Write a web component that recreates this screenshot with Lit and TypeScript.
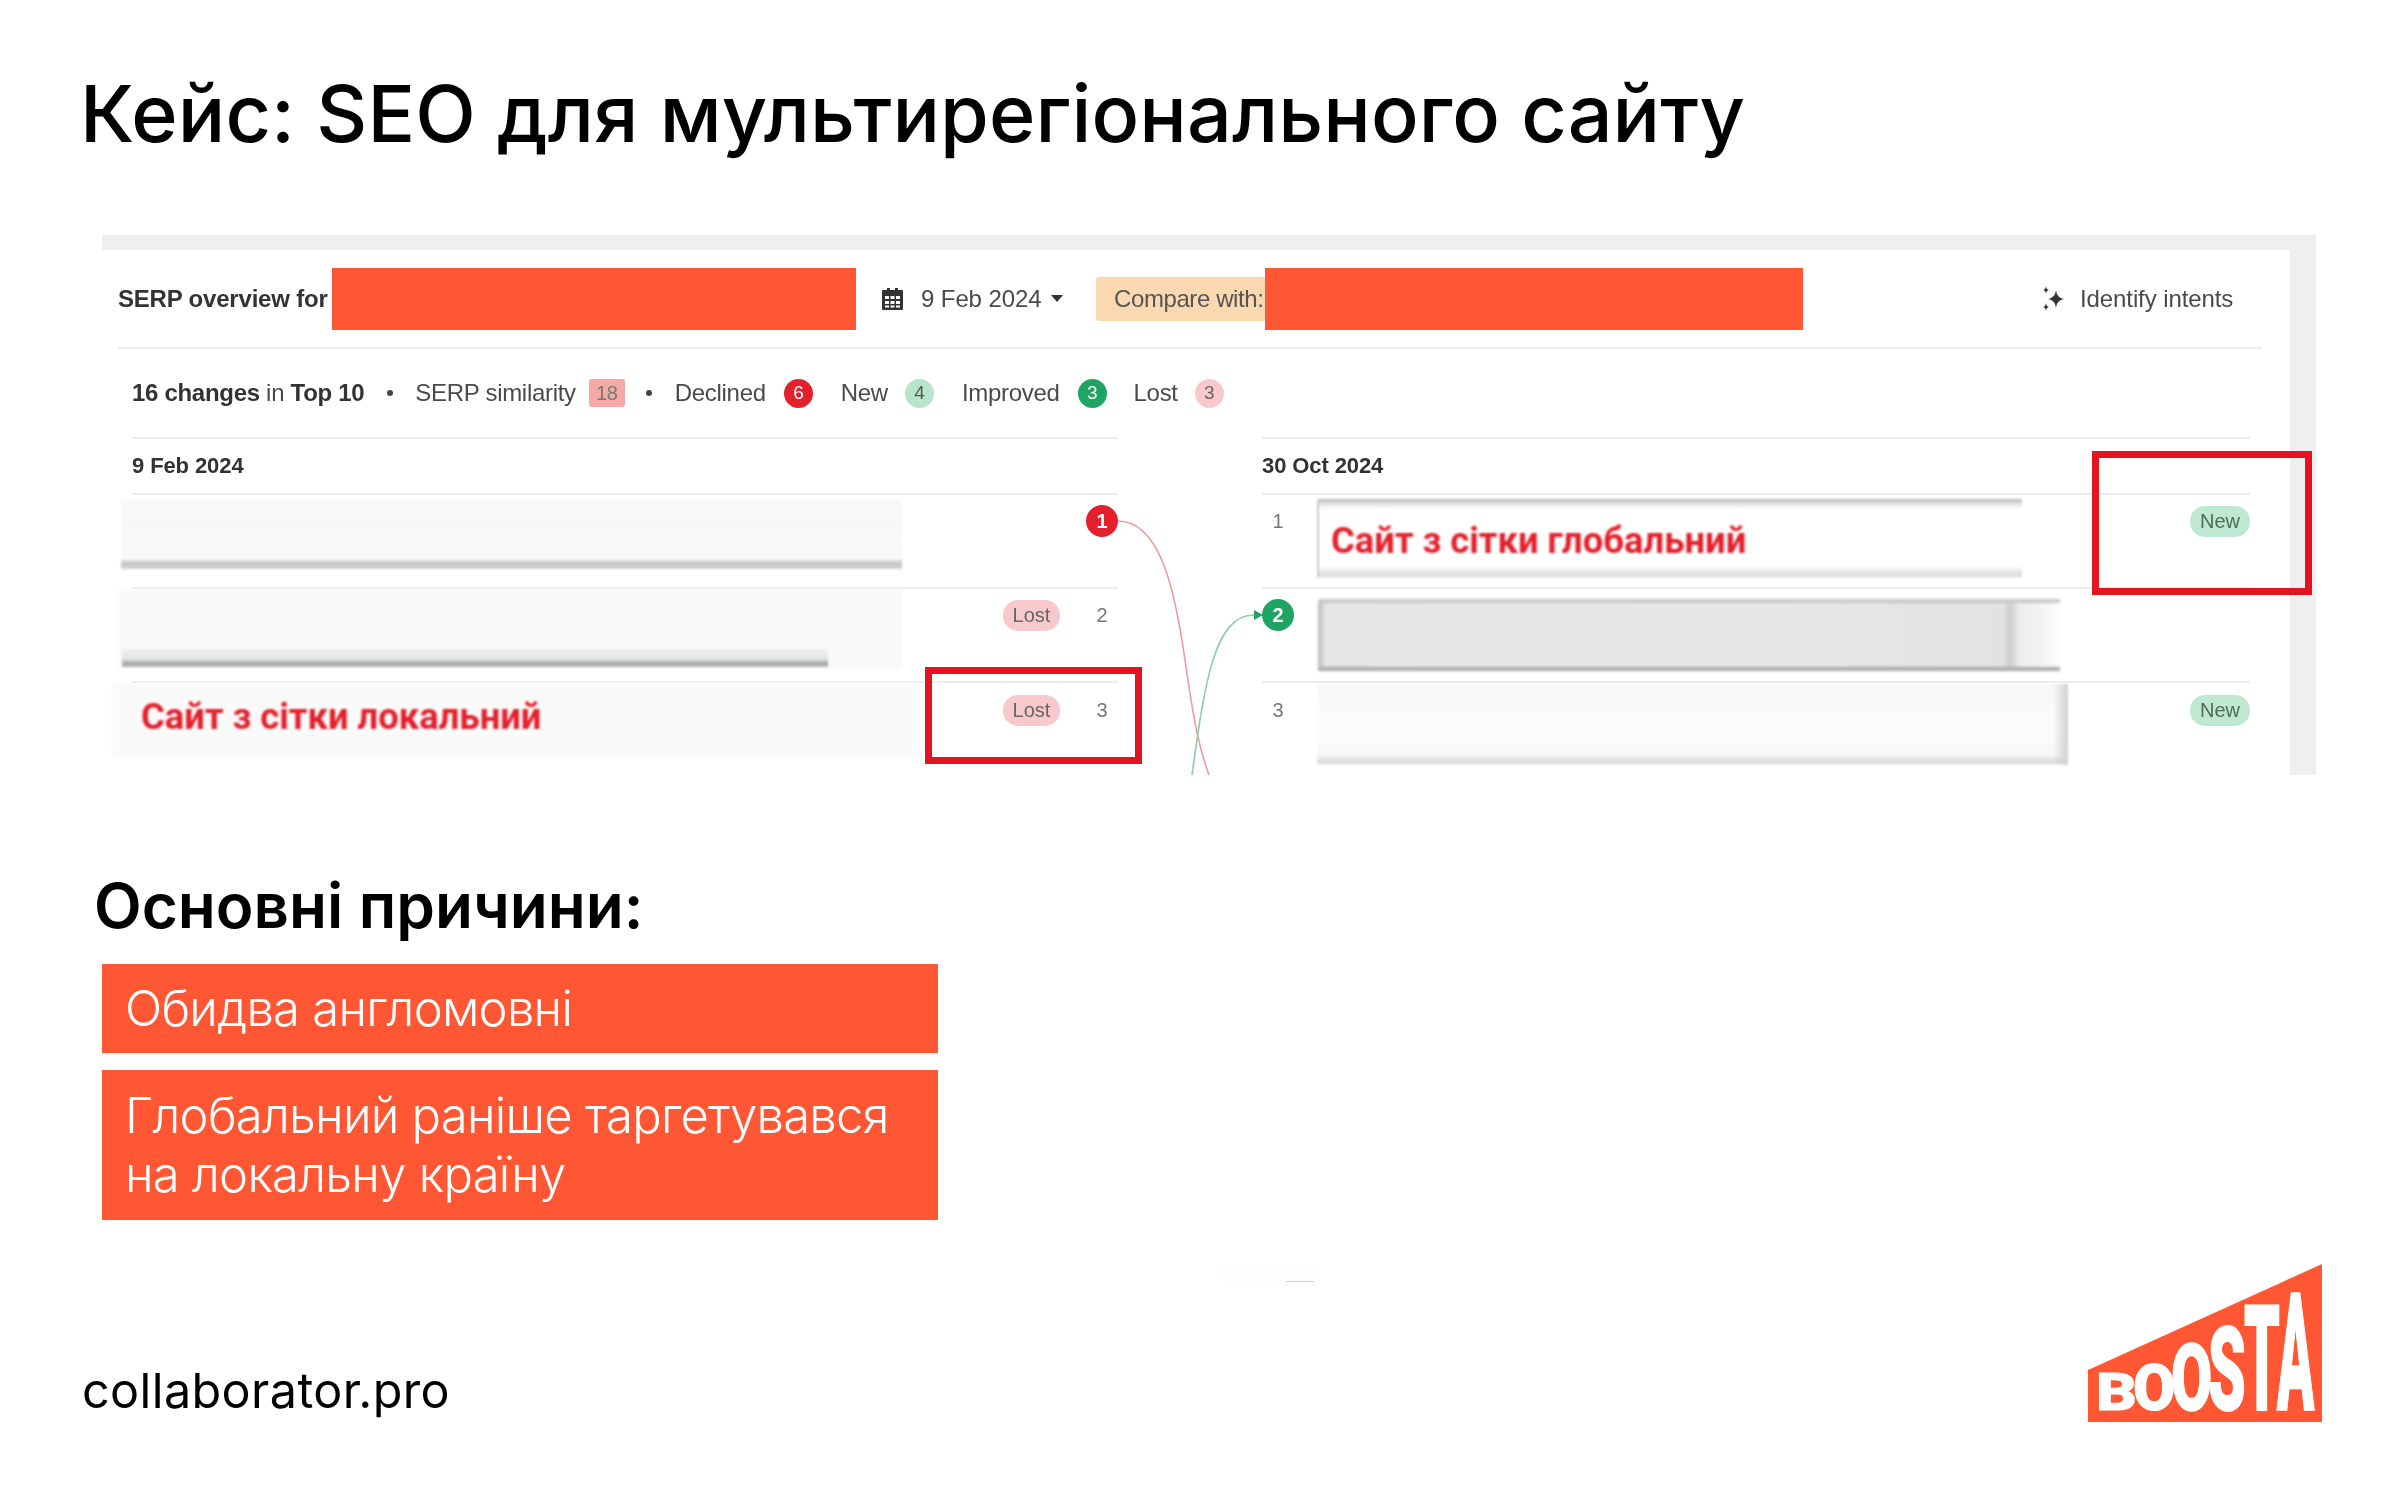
import { LitElement, html, css, svg } from "lit";
import { customElement } from "lit/decorators.js";

@customElement("app-root")
export class AppRoot extends LitElement {
  static styles = css`
    :host { display: block; font-family: "Inter", "Liberation Sans", sans-serif; }
    * { box-sizing: border-box; }
    .page { width: 2400px; height: 1500px; background: #fff; display: flex; flex-direction: column; position: relative; overflow: hidden; }
    h1 { margin: 65px 0 0 80px; height: 105px; font-size: 79px; line-height: 96px; font-weight: 450; color: #000; letter-spacing: 0.1px; white-space: nowrap; }
    .shot { margin: 65px 0 0 102px; width: 2214px; height: 540px; background: #fff; border-top: 15px solid #edeff0; border-right: 26px solid #edeff0; position: relative; font-family: "Liberation Sans", sans-serif; color: #4a4a4a; font-size: 24px; }
    .soft { filter: blur(0.45px); }
    .toolbar { height: 99px; margin-left: 16px; width: 2144px; border-bottom: 2px solid #eceeee; display: flex; align-items: center; white-space: nowrap; }
    .toolbar b { color: #333; width: 214px; letter-spacing: -0.2px; }
    .redact { background: #ff5733; height: 62px; flex: none; }
    .r1 { width: 524px; }
    .r2 { width: 538px; }
    .cal { margin-left: 25px; flex: none; }
    .date { margin-left: 17px; width: 120px; letter-spacing: -0.1px; }
    .caret { margin-left: 10px; width: 0; height: 0; border: 6px solid transparent; border-top: 7px solid #333; border-bottom: 0; flex: none; }
    .compare { margin-left: 33px; width: 169px; height: 44px; background: #fbd9b0; border-radius: 3px 0 0 3px; padding-left: 18px; display: flex; align-items: center; color: #555; flex: none; letter-spacing: -0.4px; }
    .spark { margin-left: 238px; flex: none; }
    .intent { margin-left: 15px; letter-spacing: -0.1px; }
    .stats { height: 88px; padding-left: 30px; display: flex; align-items: center; white-space: nowrap; letter-spacing: -0.3px; }
    .stats b { color: #333; }
    .stats .s { display: block; }
    .dot { width: 6px; height: 6px; border-radius: 50%; background: #444; flex: none; }
    .sq { width: 36px; height: 28px; background: #f5aaa5; border-radius: 3px; display: flex; align-items: center; justify-content: center; font-size: 20px; color: #777; flex: none; }
    .c { width: 29px; height: 29px; border-radius: 50%; display: flex; align-items: center; justify-content: center; font-size: 19px; flex: none; }
    .c.red { background: #e3202c; color: #fff; }
    .c.mint { background: #b7e4cd; color: #555; }
    .c.green { background: #1fa463; color: #fff; }
    .c.pink { background: #f7c9cb; color: #666; }
    .cols { display: grid; grid-template-columns: 986px 988px; column-gap: 144px; margin-left: 30px; }
    .head { height: 56px; border-top: 2px solid #eceeee; display: flex; align-items: center; font-weight: 700; font-size: 22px; color: #333; letter-spacing: -0.1px; }
    .row { height: 94px; border-top: 2px solid #eceeee; display: flex; position: relative; }
    .mask { flex: none; position: relative; }
    .spacer { flex: 1; }
    .meta { height: 44px; margin-top: 4px; display: flex; align-items: center; flex: none; }
    .row:last-child .meta { margin-top: 5px; }
    .pill { height: 31px; padding: 0 9px; border-radius: 15px; display: flex; align-items: center; font-size: 20px; }
    .lost { background: #f7c9cb; color: #666; width: 57px; justify-content: center; padding: 0; }
    .new { background: #bfe8d2; color: #4f6b5c; width: 60px; justify-content: center; padding: 0; }
    .num { width: 32px; text-align: center; color: #777; font-size: 20px; flex: none; }
    .gap { margin-left: 26px; }
    .big { width: 32px; height: 32px; border-radius: 50%; display: flex; align-items: center; justify-content: center; font-size: 20px; font-weight: 700; color: #fff; flex: none; }
    .big.r { background: #e3202c; }
    .big.g { background: #1fa463; }
    .ml1 { margin: 5px 0 0 -11px; width: 781px; height: 69px; background: linear-gradient(#f8f8f8, #f7f8f8 30%, #f2f3f3 32%, #f8f8f8 36%, #f8f9f9 85%, #c4c6c5 92%, #d4d6d5); filter: blur(1px); }
    .ml2 { margin: 0 0 0 -14px; width: 784px; height: 80px; background: #fafafa; filter: blur(1px); }
    .ml2::after { content: ""; position: absolute; left: 4px; bottom: 2px; width: 706px; height: 18px; background: linear-gradient(#eef0ef, #dfe3e1 60%, #a9aca9 75%, #b5b7b5); }
    .ml3 { margin: 0 0 0 -20px; width: 808px; height: 74px; background: #fafafa; filter: blur(0.8px); display: flex; align-items: center; padding: 0 0 8px 29px; }
    .redtext { color: #e3202c; font-weight: 700; font-size: 36.4px; white-space: nowrap; font-family: "Roboto", sans-serif; }
    .mr1 { margin: 4px 0 0 23px; width: 705px; height: 79px; background: linear-gradient(#b8b8b8, #eee 8%, #fff 14%, #fff 85%, #d9dad9 96%, #eee); filter: blur(0.8px); display: flex; align-items: center; padding: 3px 0 0 12px; border-left: 2px solid #ccc; }
    .mr2 { margin: 10px 0 0 24px; width: 742px; height: 72px; background: linear-gradient(90deg, #b5b6b6 0, #e4e6e5 1%, #e6e8e7 60%, #e1e3e2 92.500%, #cbcccb 93.200%, #ecedec 94.500%, #f8f8f8 99%, #fff); border-top: 4px solid #c6c8c7; border-bottom: 4px solid #a9abaa; filter: blur(1.4px); }
    .mr3 { margin: 1px 0 0 23px; width: 751px; height: 81px; background: linear-gradient(90deg, transparent 98%, #cfd1d0), linear-gradient(#f7f8f7, #fcfcfc 60%, #f7f7f7 88%, #d8d9d8 96%, #f2f2f2); filter: blur(1.2px); }
    .box { position: absolute; border: 7px solid #e3141f; }
    .b1 { left: 823px; top: 417px; width: 217px; height: 97px; }
    .b2 { left: 1990px; top: 201px; width: 220px; height: 144px; }
    .links { position: absolute; left: 0; top: -15px; pointer-events: none; }
    h2 { margin: 93px 0 0 94px; height: 76px; font-size: 62px; line-height: 76px; font-weight: 600; color: #000; white-space: nowrap; }
    .reasons { margin: 20px 0 0 102px; width: 836px; display: flex; flex-direction: column; gap: 17px; }
    .reason { background: #ff5733; color: #fff; padding: 15px 23px; font-size: 49px; line-height: 59px; font-weight: 300; letter-spacing: -0.75px; }
    .reason.two { padding: 16px 23px; }
    .stain { position: absolute; left: 1222px; top: 1265px; width: 92px; height: 17px; background: #fffdf9; }
    .stain::after { content: ""; position: absolute; right: 0; bottom: 0; width: 28px; height: 1px; background: #f6c3a8; }
    .foot { position: absolute; left: 82px; right: 78px; bottom: 78px; display: flex; justify-content: space-between; align-items: flex-end; }
    .site { font-size: 48.5px; color: #000; margin-bottom: 2px; letter-spacing: 0.4px; }
    .logo { display: block; overflow: visible; }
    .logo text { font-family: "Roboto", sans-serif; font-weight: 900; font-size: 100px; fill: #fff; stroke: #fff; stroke-width: 1.5px; }
  `;

  private letter(ch: string, x: number, top: number, w: number, gw: number, bottom = 146) {
    const sy = (bottom - top) / 71.1;
    const sx = w / gw;
    return svg`<text transform="translate(${x} ${bottom}) scale(${sx} ${sy})">${ch}</text>`;
  }

  render() {
    return html`
      <div class="page">
        <h1>Кейс: SEO для мультирегіонального сайту</h1>

        <section class="shot">
          <div class="toolbar">
            <b class="soft">SERP overview for</b>
            <div class="redact r1"></div>
            <svg class="cal soft" width="23" height="24" viewBox="0 0 23 24"><path fill="#333" d="M2 3h4V1h3v2h5V1h3v2h4a1 1 0 0 1 1 1v18a1 1 0 0 1-1 1H2a1 1 0 0 1-1-1V4a1 1 0 0 1 1-1z"/><path fill="#fff" d="M4 9h4v3H4zM9.5 9h4v3h-4zM15 9h4v3h-4zM4 14h4v3H4zM9.5 14h4v3h-4zM15 14h4v3h-4zM4 18.500h4v2H4zM9.500 18.500h4v2h-4zM15 18.500h4v2h-4z"/></svg>
            <span class="date soft">9 Feb 2024</span>
            <span class="caret soft"></span>
            <div class="compare"><span class="soft">Compare with:</span></div>
            <div class="redact r2"></div>
            <svg class="spark soft" width="24" height="26" viewBox="0 0 24 26"><path fill="#333" d="M15 4c.8 5 2.200 7.500 8 9-5.800 1.500-7.200 4-8 9-.8-5-2.200-7.500-8-9 5.800-1.500 7.200-4 8-9zM5 0c.4 2.600 1 3.500 3 4-2 .5-2.600 1.400-3 4-.4-2.600-1-3.500-3-4 2-.5 2.600-1.400 3-4zM5 17c.4 2.500 1 3.400 3 4-2 .5-2.600 1.400-3 4-.4-2.600-1-3.500-3-4 2-.6 2.600-1.500 3-4z"/></svg>
            <span class="intent soft">Identify intents</span>
          </div>

          <div class="stats soft">
            <span class="s"><b>16 changes</b> in <b>Top 10</b></span>
            <span class="dot" style="margin-left:23px"></span>
            <span class="s" style="margin-left:22px">SERP similarity</span>
            <span class="sq" style="margin-left:13px">18</span>
            <span class="dot" style="margin-left:21px"></span>
            <span class="s" style="margin-left:23px">Declined</span>
            <span class="c red" style="margin-left:18px">6</span>
            <span class="s" style="margin-left:28px">New</span>
            <span class="c mint" style="margin-left:17px">4</span>
            <span class="s" style="margin-left:28px">Improved</span>
            <span class="c green" style="margin-left:18px">3</span>
            <span class="s" style="margin-left:27px">Lost</span>
            <span class="c pink" style="margin-left:17px">3</span>
          </div>

          <div class="cols">
            <div class="col">
              <div class="head"><span class="soft">9 Feb 2024</span></div>
              <div class="row">
                <div class="mask ml1"></div><div class="spacer"></div>
                <div class="meta"><span class="big r soft">1</span></div>
              </div>
              <div class="row">
                <div class="mask ml2"></div><div class="spacer"></div>
                <div class="meta soft"><span class="pill lost">Lost</span><span class="num gap">2</span></div>
              </div>
              <div class="row">
                <div class="mask ml3"><span class="redtext">Сайт з сітки локальний</span></div><div class="spacer"></div>
                <div class="meta soft"><span class="pill lost">Lost</span><span class="num gap">3</span></div>
              </div>
            </div>
            <div class="col">
              <div class="head"><span class="soft">30 Oct 2024</span></div>
              <div class="row">
                <div class="meta soft"><span class="num">1</span></div>
                <div class="mask mr1"><span class="redtext">Сайт з сітки глобальний</span></div><div class="spacer"></div>
                <div class="meta soft"><span class="pill new">New</span></div>
              </div>
              <div class="row">
                <div class="meta soft"><span class="big g">2</span></div>
                <div class="mask mr2"></div><div class="spacer"></div>
              </div>
              <div class="row">
                <div class="meta soft"><span class="num">3</span></div>
                <div class="mask mr3"></div><div class="spacer"></div>
                <div class="meta soft"><span class="pill new">New</span></div>
              </div>
            </div>
          </div>

          <svg class="links" width="2188" height="540" viewBox="0 0 2188 540" fill="none">
            <path d="M1016 286C1058 286 1073 355 1083 425S1098 515 1107 540" stroke="#f09a9e" stroke-width="1.6"/>
            <path d="M1090 540C1103 445 1113 380 1152 380" stroke="#86cfa9" stroke-width="1.6"/>
            <path d="M1152 375l9 5-9 5z" fill="#1fa463"/>
          </svg>
          <div class="box b1"></div>
          <div class="box b2"></div>
        </section>

        <h2>Основні причини:</h2>
        <div class="reasons">
          <div class="reason">Обидва англомовні</div>
          <div class="reason two">Глобальний раніше таргетувався<br />на локальну країну</div>
        </div>

        <div class="stain"></div>

        <footer class="foot">
          <span class="site">collaborator.pro</span>
          <svg class="logo" width="234" height="158" viewBox="0 0 234 158">
            <path d="M0 106L234 0V158H0z" fill="#ff5733"/>
            ${this.letter("B", 8, 109, 38, 60)}
            ${this.letter("O", 45, 100, 38, 62)}
            ${this.letter("O", 83, 80, 37, 62)}
            ${this.letter("S", 120, 63, 35, 58)}
            ${this.letter("T", 156, 42, 33, 58)}
            ${this.letter("A", 189, 30, 36, 66)}
          </svg>
        </footer>
      </div>
    `;
  }
}
